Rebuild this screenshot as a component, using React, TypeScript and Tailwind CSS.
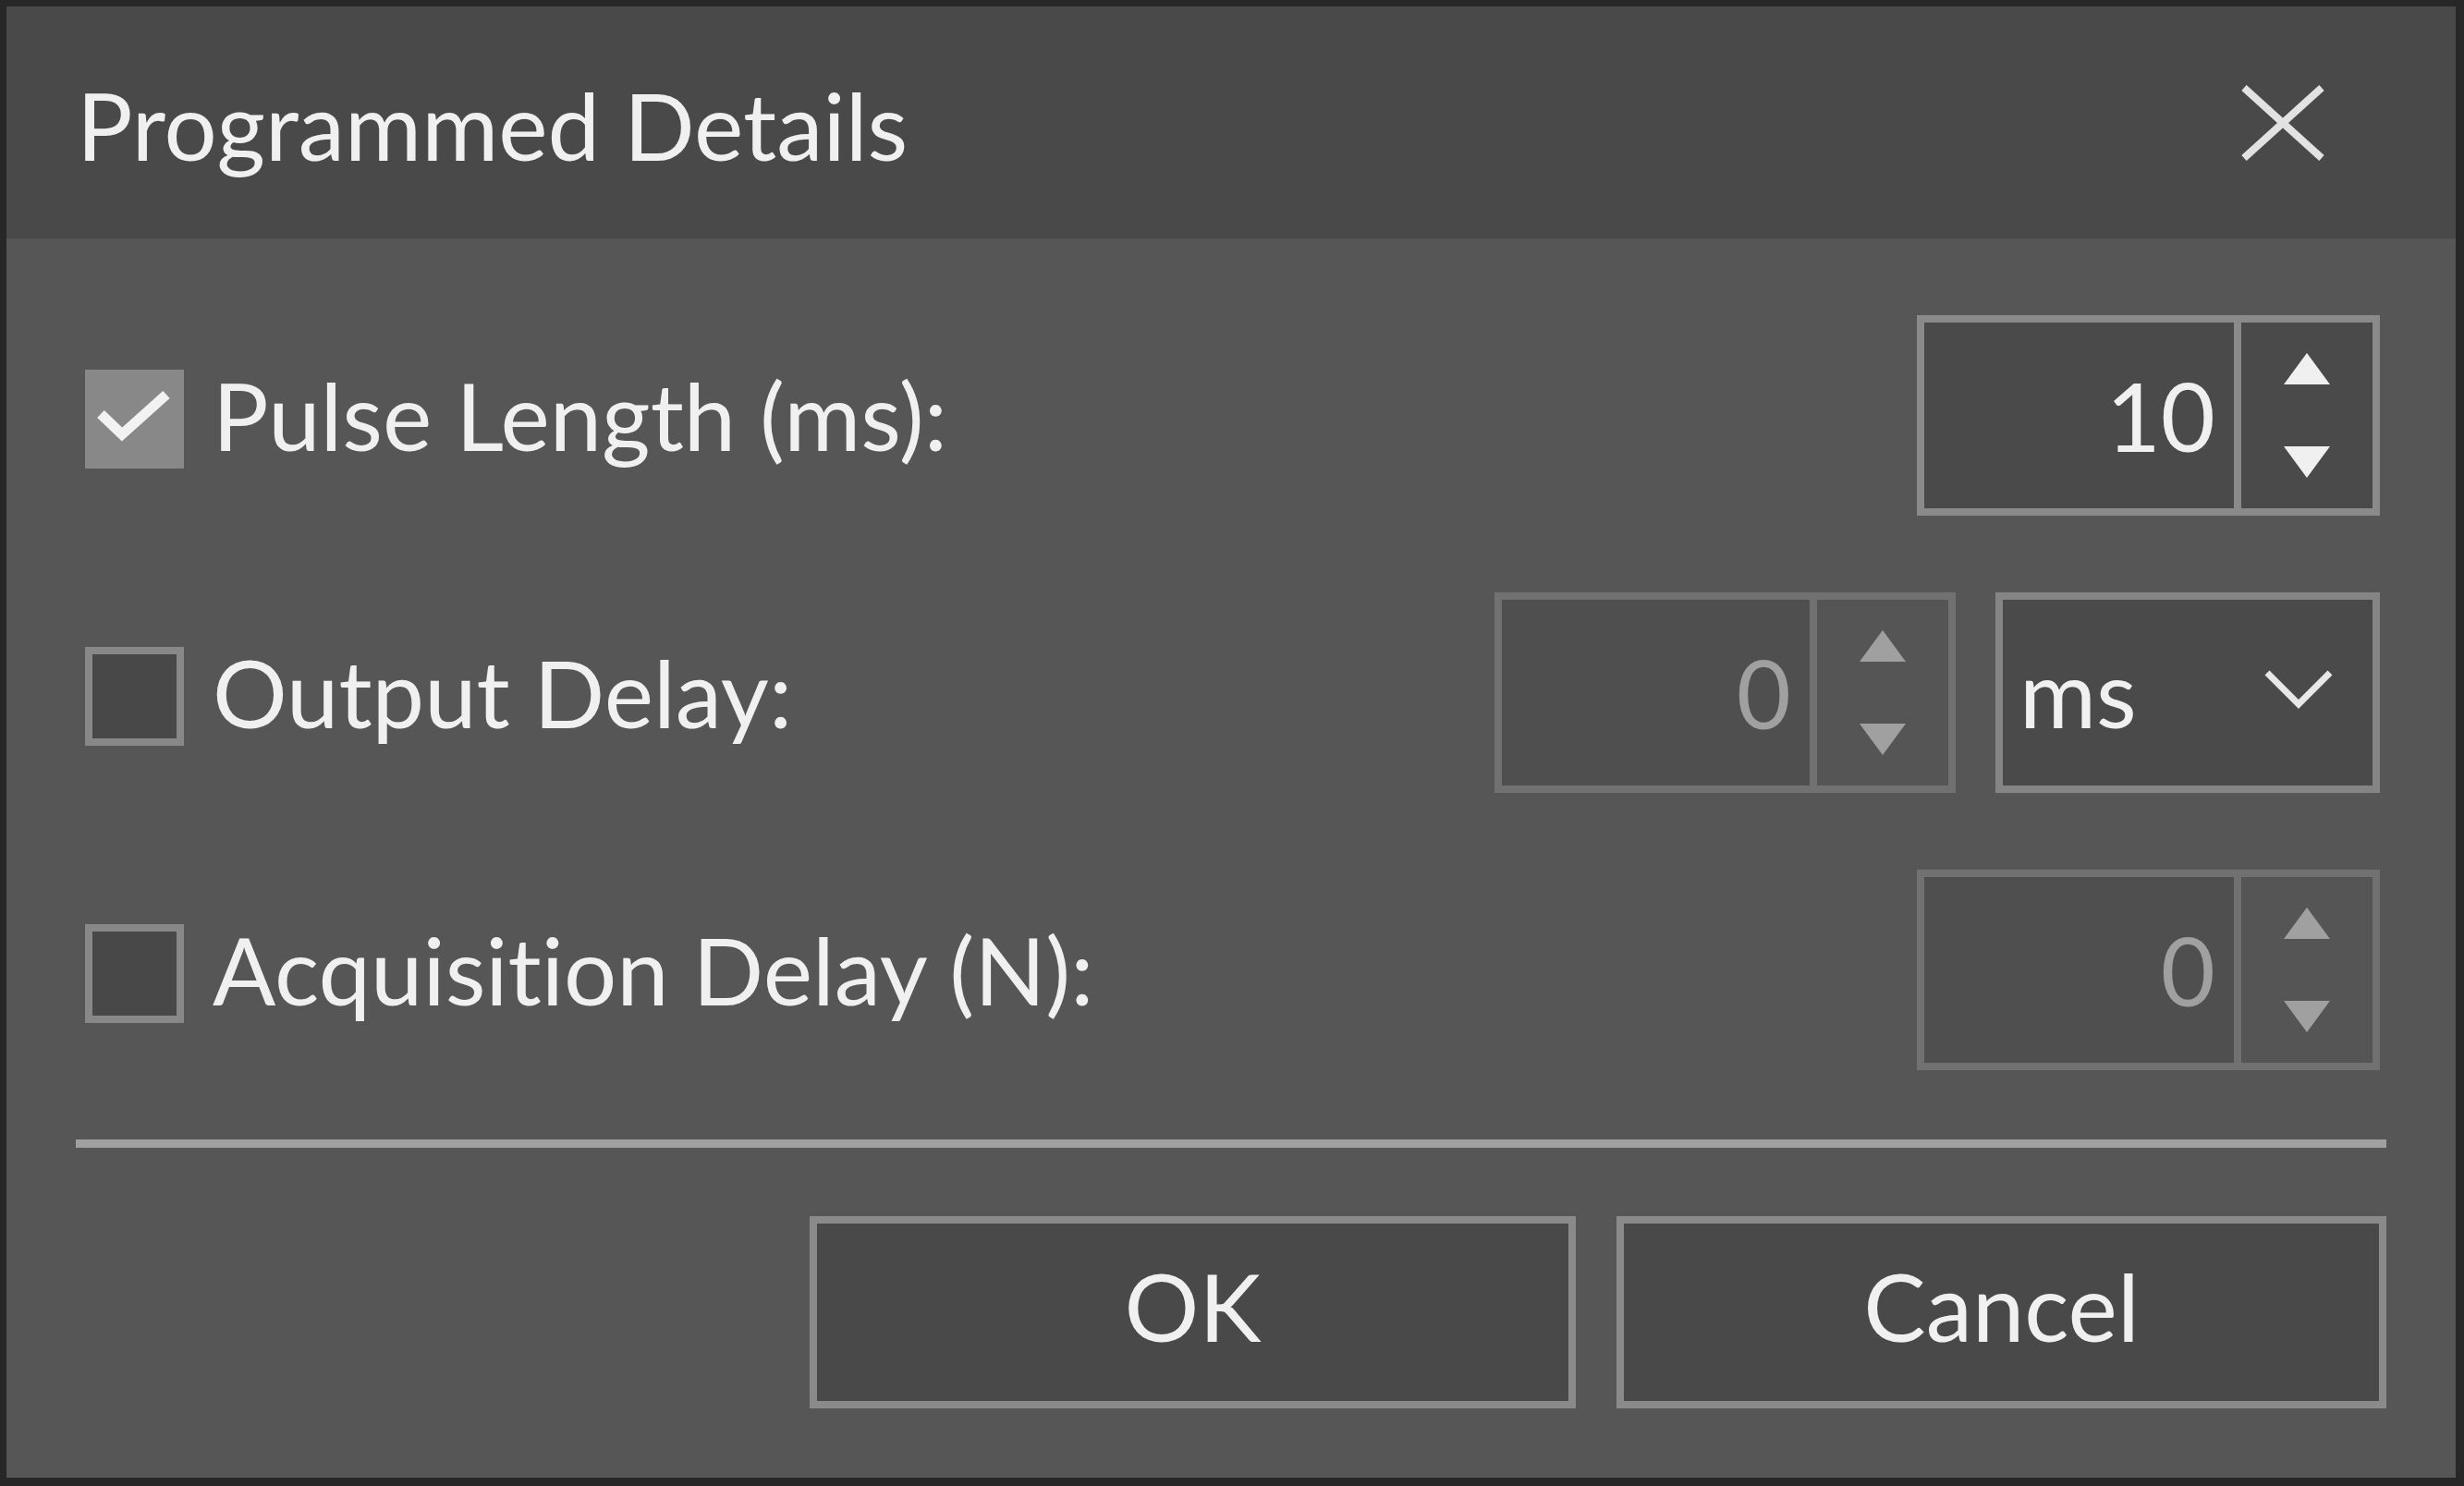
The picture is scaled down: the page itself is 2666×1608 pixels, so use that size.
import React from "react";

const FONT = "font-['Lato','Noto_Sans',sans-serif] [font-variant-ligatures:none]";

function Arrow({ up, color }: { up: boolean; color: string }) {
  return (
    <svg width="50" height="34" viewBox="0 0 50 34">
      {up ? (
        <polygon points="25,0 50,34 0,34" fill={color} />
      ) : (
        <polygon points="0,0 50,0 25,34" fill={color} />
      )}
    </svg>
  );
}

function SpinBox({ value, enabled, wide }: { value: string; enabled: boolean; wide: boolean }) {
  const arrow = enabled ? "#f0f0f0" : "#a0a0a0";
  return (
    <div
      className={`flex h-[217px] border-[8px] ${wide ? "w-[501px]" : "w-[499px]"} ${
        enabled ? "border-[#8a8a8a]" : "border-[#717171]"
      }`}
    >
      <div
        className={`flex flex-1 items-center justify-end pr-[20px] text-[102px] leading-none ${
          enabled ? "bg-[#4a4a4a] text-[#f0f0f0]" : "bg-[#4f4f4f] text-[#a0a0a0]"
        }`}
      >
        {value}
      </div>
      <div className={`w-[8px] ${enabled ? "bg-[#8a8a8a]" : "bg-[#717171]"}`} />
      <div
        className={`flex w-[142px] flex-col items-center justify-between py-[33px] ${
          enabled ? "bg-[#4a4a4a]" : "bg-[#555555]"
        }`}
      >
        <Arrow up color={arrow} />
        <Arrow up={false} color={arrow} />
      </div>
    </div>
  );
}

function CheckBox({ checked }: { checked: boolean }) {
  if (checked) {
    return (
      <div className="mt-[8px] h-[107px] w-[107px] shrink-0 bg-[#888888]">
        <svg width="107" height="107" viewBox="0 0 107 107">
          <polyline points="17,48 40,70 88,27" fill="none" stroke="#f2f2f2" strokeWidth="11" />
        </svg>
      </div>
    );
  }
  return <div className="mt-[8px] h-[107px] w-[107px] shrink-0 border-[8px] border-[#888888] bg-[#484848]" />;
}

function Row({ label, checked, children }: { label: string; checked: boolean; children: React.ReactNode }) {
  return (
    <div className="flex h-[217px] items-center">
      <CheckBox checked={checked} />
      <span className="ml-[31px] text-[101px] leading-none text-[#f0f0f0]">{label}</span>
      <div className="flex-1" />
      {children}
    </div>
  );
}

export default function App() {
  return (
    <div className={`h-[1608px] w-[2666px] bg-[#272727] pl-[7px] pt-[7px] ${FONT}`}>
      <div className="flex h-[1592px] w-[2650px] flex-col bg-[#565656]">
        {/* Title bar */}
        <div className="flex h-[251px] items-center justify-between bg-[#494949] pl-[76px] pr-[141px]">
          <span className="mt-[6px] text-[101px] leading-none text-[#f0f0f0]">Programmed Details</span>
          <svg width="92" height="84" viewBox="0 0 92 84">
            <line x1="4" y1="4" x2="88" y2="80" stroke="#e2e2e2" strokeWidth="8" />
            <line x1="88" y1="4" x2="4" y2="80" stroke="#e2e2e2" strokeWidth="8" />
          </svg>
        </div>

        {/* Body */}
        <div className="flex flex-col px-[75px] pb-[75px] pt-[83px]">
          <div className="ml-[10px] mr-[7px] flex flex-col gap-[83px]">
            <Row label="Pulse Length (ms):" checked>
              <SpinBox value="10" enabled wide />
            </Row>
            <Row label="Output Delay:" checked={false}>
              <SpinBox value="0" enabled={false} wide={false} />
              <div className="ml-[43px] flex h-[217px] w-[416px] items-center justify-between border-[8px] border-[#858585] bg-[#4a4a4a] pl-[18px] pr-[43px]">
                <span className="text-[101px] leading-none text-[#f0f0f0]">ms</span>
                <svg width="74" height="42" viewBox="0 0 74 42" className="mb-[8px]">
                  <polyline points="3,3 37,37 71,3" fill="none" stroke="#e8e8e8" strokeWidth="7" />
                </svg>
              </div>
            </Row>
            <Row label="Acquisition Delay (N):" checked={false}>
              <SpinBox value="0" enabled={false} wide />
            </Row>
          </div>

          <div className="mt-[75px] h-[9px] bg-[#a0a0a0]" />

          <div className="mt-[74px] flex justify-end gap-[44px]">
            <button className="flex h-[208px] w-[829px] items-center justify-center border-[8px] border-[#8a8a8a] bg-[#494949] pb-[14px] text-[101px] leading-none text-[#f0f0f0]">
              OK
            </button>
            <button className="flex h-[208px] w-[833px] items-center justify-center border-[8px] border-[#8a8a8a] bg-[#494949] pb-[14px] text-[101px] leading-none text-[#f0f0f0]">
              Cancel
            </button>
          </div>
        </div>
      </div>
    </div>
  );
}
